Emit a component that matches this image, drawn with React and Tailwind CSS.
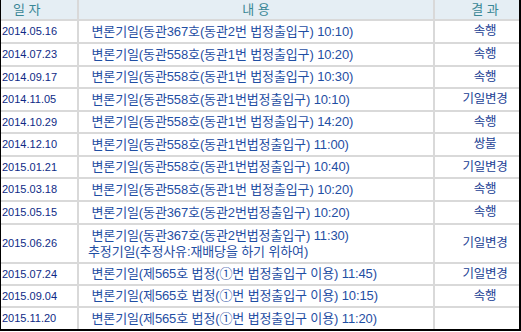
import React from 'react';

const rows = [
  { date: '2014.05.16', lines: ['변론기일(동관367호(동관2번 법정출입구) 10:10)'], result: '속행', h: 'h-[21px]' },
  { date: '2014.07.23', lines: ['변론기일(동관558호(동관1번 법정출입구) 10:20)'], result: '속행', h: 'h-[21px]' },
  { date: '2014.09.17', lines: ['변론기일(동관558호(동관1번 법정출입구) 10:30)'], result: '속행', h: 'h-[20px]' },
  { date: '2014.11.05', lines: ['변론기일(동관558호(동관1번법정출입구) 10:10)'], result: '기일변경', h: 'h-[21px]' },
  { date: '2014.10.29', lines: ['변론기일(동관558호(동관1번 법정출입구) 14:20)'], result: '속행', h: 'h-[20px]' },
  { date: '2014.12.10', lines: ['변론기일(동관558호(동관1번법정출입구) 11:00)'], result: '쌍불', h: 'h-[21px]' },
  { date: '2015.01.21', lines: ['변론기일(동관558호(동관1번법정출입구) 10:40)'], result: '기일변경', h: 'h-[20px]' },
  { date: '2015.03.18', lines: ['변론기일(동관558호(동관1번 법정출입구) 10:20)'], result: '속행', h: 'h-[21px]' },
  { date: '2015.05.15', lines: ['변론기일(동관367호(동관2번법정출입구) 10:20)'], result: '속행', h: 'h-[21px]' },
  {
    date: '2015.06.26',
    lines: ['변론기일(동관367호(동관2번법정출입구) 11:30)', '추정기일(추정사유:재배당을 하기 위하여)'],
    result: '기일변경',
    h: 'h-[37px]',
  },
  { date: '2015.07.24', lines: ['변론기일(제565호 법정(①번 법정출입구 이용) 11:45)'], result: '기일변경', h: 'h-[20px]' },
  { date: '2015.09.04', lines: ['변론기일(제565호 법정(①번 법정출입구 이용) 10:15)'], result: '속행', h: 'h-[20px]' },
  { date: '2015.11.20', lines: ['변론기일(제565호 법정(①번 법정출입구 이용) 11:20)'], result: '', h: 'h-[21px]' },
];

export default function App() {
  return (
    <div
      className="w-[521px] h-[332px] bg-white"
      style={{ fontFamily: '"Liberation Sans", "Noto Sans CJK KR", sans-serif' }}
    >
      <div className="w-[521px] border-l border-r-2 border-b-2 border-black bg-[#d9d9d9] flex flex-col gap-[2px]">
        {/* Header */}
        <div className="flex gap-[2px] h-[19px]">
          <div className="w-[76px] bg-[#e5eef4] text-[#3a8796] text-[13px] leading-[19px] pl-[12px]">일 자</div>
          <div className="w-[354px] bg-[#e5eef4] text-[#3a8796] text-[13px] leading-[19px] text-center">내 용</div>
          <div className="flex-1 bg-[#e5eef4] text-[#3a8796] text-[13px] leading-[19px] text-center pl-[16px]">결 과</div>
        </div>

        {rows.map((row) => (
          <div key={row.date} className={`flex gap-[2px] ${row.h}`}>
            <div className="w-[76px] bg-white flex items-center pl-[1px] text-[11px] text-[#0e2a86]">{row.date}</div>
            <div className="w-[354px] bg-white flex flex-col justify-center pl-[9px] text-[13px] tracking-[-0.12px] leading-[16px] text-[#1f4ea3] whitespace-nowrap">
              {row.lines.map((line, i) => (
                <div key={i}>{i === 0 ? '\u00a0' + line : line}</div>
              ))}
            </div>
            <div className="flex-1 bg-white flex items-center justify-center pl-[16px] text-[12.5px] tracking-[-0.3px] text-[#1b3f95]">
              {row.result}
            </div>
          </div>
        ))}
      </div>
    </div>
  );
}
